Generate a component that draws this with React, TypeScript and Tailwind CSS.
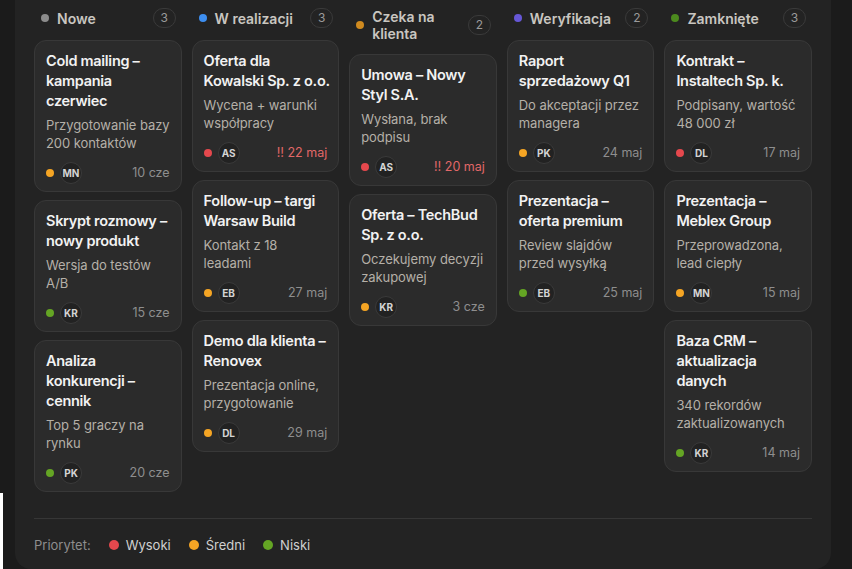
import React from 'react';

type Card = {
  title: string;
  desc: string;
  priority: 'high' | 'mid' | 'low';
  who: string;
  date: string;
  overdue?: boolean;
};

type Column = {
  name: string;
  dot: string;
  cards: Card[];
};

const priorityDot = {
  high: 'bg-[#e5484d]',
  mid: 'bg-[#f5a524]',
  low: 'bg-[#64a524]',
};

// non-breaking spaces keep the dash (and company names) on one line
const columns: Column[] = [
  {
    name: 'Nowe',
    dot: 'bg-[#8c8c8c]',
    cards: [
      { title: 'Cold mailing\u00a0– kampania czerwiec', desc: 'Przygotowanie bazy 200 kontaktów', priority: 'mid', who: 'MN', date: '10 cze' },
      { title: 'Skrypt rozmowy\u00a0– nowy produkt', desc: 'Wersja do testów A/B', priority: 'low', who: 'KR', date: '15 cze' },
      { title: 'Analiza konkurencji\u00a0– cennik', desc: 'Top 5 graczy na rynku', priority: 'low', who: 'PK', date: '20 cze' },
    ],
  },
  {
    name: 'W realizacji',
    dot: 'bg-[#3d8ef0]',
    cards: [
      { title: 'Oferta dla Kowalski\u00a0Sp.\u00a0z\u00a0o.o.', desc: 'Wycena + warunki współpracy', priority: 'high', who: 'AS', date: '22 maj', overdue: true },
      { title: 'Follow-up\u00a0– targi Warsaw Build', desc: 'Kontakt z 18 leadami', priority: 'mid', who: 'EB', date: '27 maj' },
      { title: 'Demo dla klienta\u00a0– Renovex', desc: 'Prezentacja online, przygotowanie', priority: 'mid', who: 'DL', date: '29 maj' },
    ],
  },
  {
    name: 'Czeka na klienta',
    dot: 'bg-[#cf8a1f]',
    cards: [
      { title: 'Umowa\u00a0– Nowy Styl S.A.', desc: 'Wysłana, brak podpisu', priority: 'high', who: 'AS', date: '20 maj', overdue: true },
      { title: 'Oferta\u00a0– TechBud Sp. z\u00a0o.o.', desc: 'Oczekujemy decyzji zakupowej', priority: 'mid', who: 'KR', date: '3 cze' },
    ],
  },
  {
    name: 'Weryfikacja',
    dot: 'bg-[#6657d6]',
    cards: [
      { title: 'Raport sprzedażowy Q1', desc: 'Do akceptacji przez managera', priority: 'mid', who: 'PK', date: '24 maj' },
      { title: 'Prezentacja\u00a0– oferta premium', desc: 'Review slajdów przed wysyłką', priority: 'low', who: 'EB', date: '25 maj' },
    ],
  },
  {
    name: 'Zamknięte',
    dot: 'bg-[#4c8a1e]',
    cards: [
      { title: 'Kontrakt\u00a0– Instaltech Sp. k.', desc: 'Podpisany, wartość 48\u00a0000 zł', priority: 'high', who: 'DL', date: '17 maj' },
      { title: 'Prezentacja\u00a0– Meblex Group', desc: 'Przeprowadzona, lead ciepły', priority: 'mid', who: 'MN', date: '15 maj' },
      { title: 'Baza CRM\u00a0– aktualizacja danych', desc: '340 rekordów zaktualizowanych', priority: 'low', who: 'KR', date: '14 maj' },
    ],
  },
];

function TaskCard({ card }: { card: Card }) {
  return (
    <div className="rounded-xl border border-[#383838] bg-[#2b2b2b] px-[11px] pt-[10px] pb-[7px]">
      <div className="text-[14.5px] font-semibold leading-5 tracking-[-0.02em] text-[#f2f2f2]">{card.title}</div>
      <div className="mt-[5px] text-[13px] leading-[18px] tracking-[-0.005em] text-[#b5b0a8]">{card.desc}</div>
      <div className="mt-[10px] flex items-center gap-[6px]">
        <span className={`h-2 w-2 rounded-full ${priorityDot[card.priority]}`} />
        <span className="flex h-[22px] w-[22px] items-center justify-center rounded-full border border-[#3a3a3a] bg-[#222222] text-[10px] font-bold text-[#d4d4d4]">
          {card.who}
        </span>
        <span
          className={
            card.overdue
              ? 'ml-auto text-[12.5px] text-[#e26868]'
              : 'ml-auto text-[12.5px] text-[#8e8e8e]'
          }
        >
          {card.overdue ? '‼ ' : ''}
          {card.date}
        </span>
      </div>
    </div>
  );
}

export default function App() {
  return (
    <div className="relative min-h-screen bg-[#1b1b1b] font-['Inter','Liberation_Sans',sans-serif]">
      <div className="ml-[15px] flex h-[569px] w-[816px] flex-col rounded-b-2xl bg-[#232323] px-[19px]">
        <div className="grid flex-1 grid-cols-5 items-start gap-[10px]">
          {columns.map((col) => (
            <div key={col.name} className="flex flex-col">
              <div className="flex items-center pt-2 pb-3 pl-[7px] pr-[6px]">
                <span className={`mr-2 h-2 w-2 shrink-0 rounded-full ${col.dot}`} />
                <span className="flex-1 pr-2 text-[14px] font-semibold leading-[17px] text-[#c9c6c0]">
                  {col.name}
                </span>
                <span className="flex h-5 min-w-[23px] items-center justify-center rounded-full border border-[#3a3a3a] text-[12px] text-[#9a9a9a]">
                  {col.cards.length}
                </span>
              </div>
              <div className="flex flex-col gap-2">
                {col.cards.map((c) => (
                  <TaskCard key={c.title} card={c} />
                ))}
              </div>
            </div>
          ))}
        </div>
        <div className="flex items-center gap-[18px] border-t border-[#363636] pt-[16px] pb-[14px] text-[13px] leading-5">
          <span className="text-[#8e8e8e]">Priorytet:</span>
          <span className="flex items-center gap-[7px] text-[#d0d0d0]">
            <span className="h-[10px] w-[10px] rounded-full bg-[#e5484d]" />
            Wysoki
          </span>
          <span className="flex items-center gap-[7px] text-[#d0d0d0]">
            <span className="h-[10px] w-[10px] rounded-full bg-[#f5a524]" />
            Średni
          </span>
          <span className="flex items-center gap-[7px] text-[#d0d0d0]">
            <span className="h-[10px] w-[10px] rounded-full bg-[#64a524]" />
            Niski
          </span>
        </div>
      </div>
      <div className="absolute bottom-0 left-0 h-[76px] w-[3px] bg-white" />
    </div>
  );
}
